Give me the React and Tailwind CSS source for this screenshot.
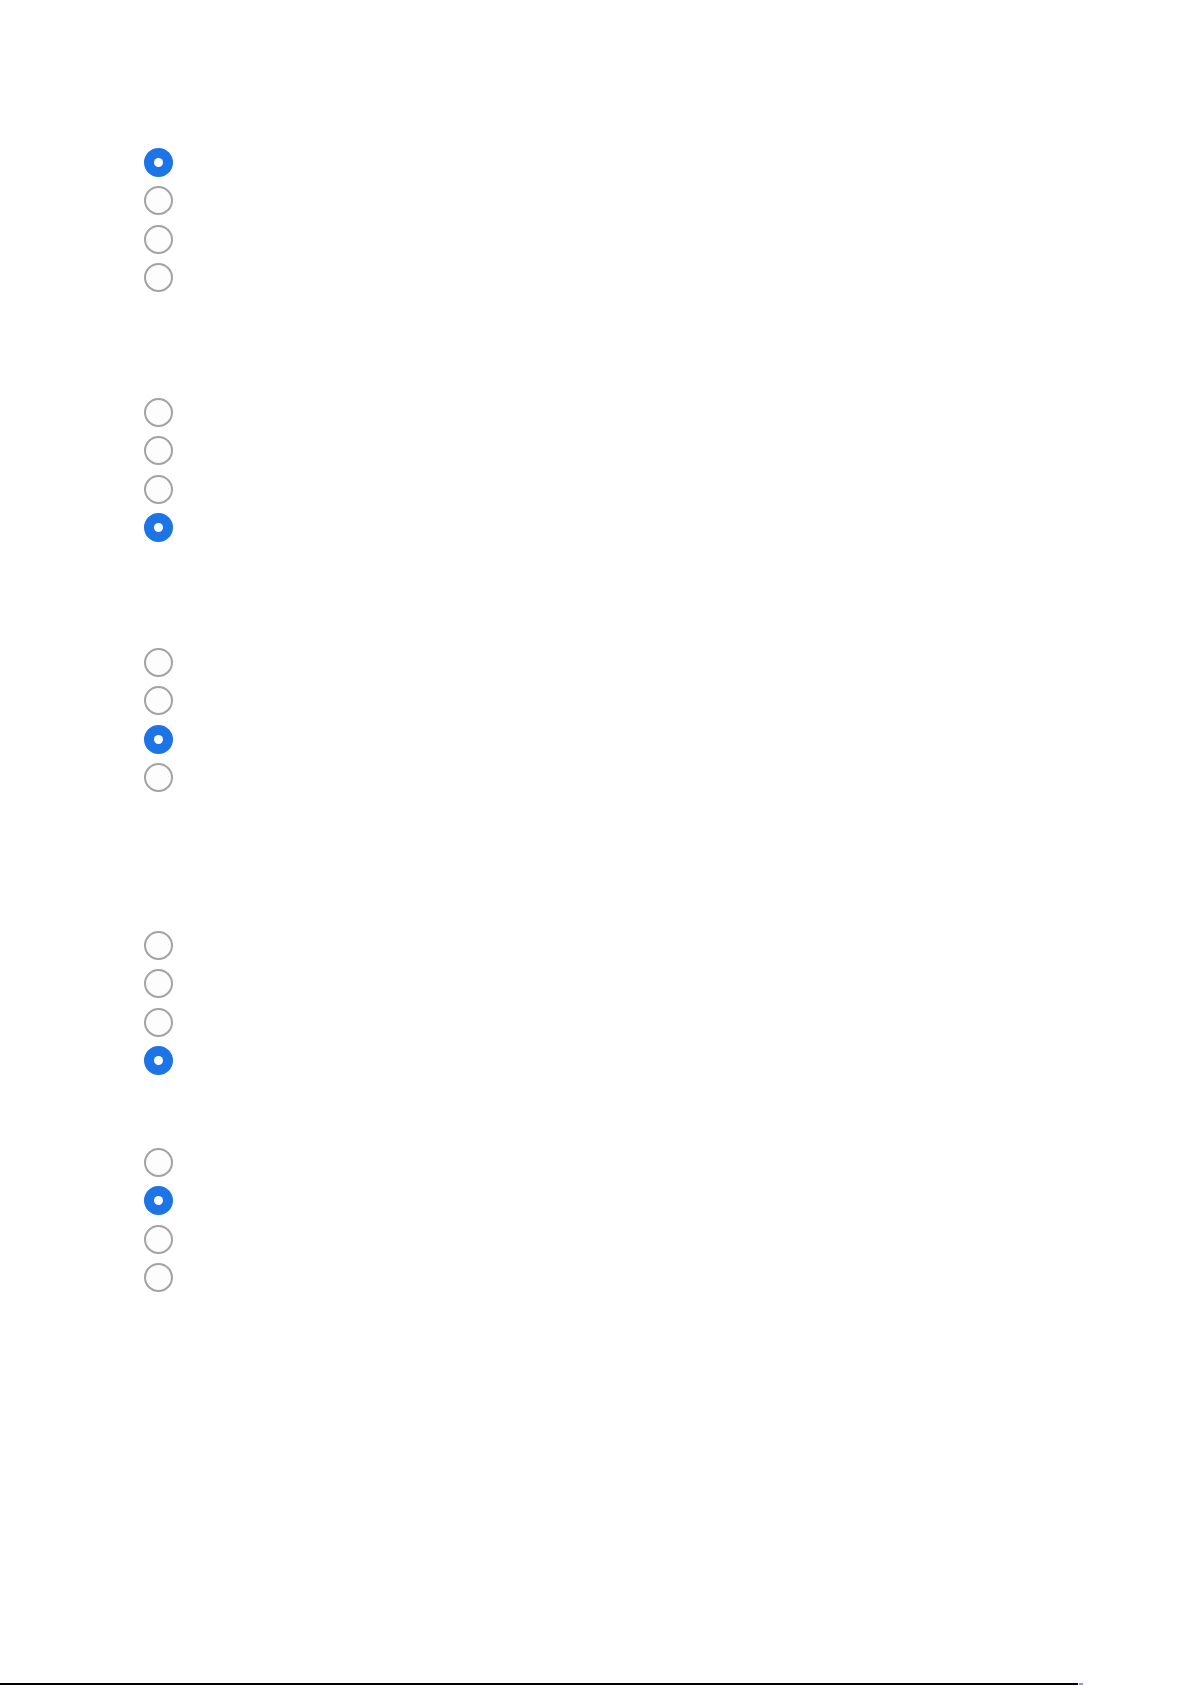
const groups = [
  { name: 'q1', selected: 0, gapBefore: 'pt-[143px]' },
  { name: 'q2', selected: 3, gapBefore: 'pt-[96px]' },
  { name: 'q3', selected: 2, gapBefore: 'pt-[96px]' },
  { name: 'q4', selected: 3, gapBefore: 'pt-[129px]' },
  { name: 'q5', selected: 1, gapBefore: 'pt-[63px]' },
];

const Radio = ({ checked }) =>
  checked ? (
    <span className="flex h-[29px] w-[29px] items-center justify-center rounded-full bg-[#1c74e6]">
      <span className="h-[9px] w-[9px] rounded-full bg-white" />
    </span>
  ) : (
    <span className="h-[29px] w-[29px] rounded-full border-[2.5px] border-[#a3a3a3] bg-[#fdfdfd]" />
  );

const RadioGroup = ({ group }) => (
  <div className={group.gapBefore} role="radiogroup">
    {[0, 1, 2, 3].map((i) => (
      <div key={i} className="flex h-[38.5px] items-center pl-[144px]" role="radio" aria-checked={i === group.selected}>
        <Radio checked={i === group.selected} />
      </div>
    ))}
  </div>
);

const App = () => (
  <div className="flex min-h-[1685px] w-[1192px] flex-col bg-white font-['Liberation_Sans',sans-serif]">
    {groups.map((g) => (
      <RadioGroup key={g.name} group={g} />
    ))}
    <div className="flex-1" />
    <div className="flex items-end pb-0">
      <div className="h-[2px] w-[1078px] bg-black" />
      <div className="ml-[1px] h-[2px] w-[4px] bg-[#6aa0ff]" />
    </div>
  </div>
);

export default App;
